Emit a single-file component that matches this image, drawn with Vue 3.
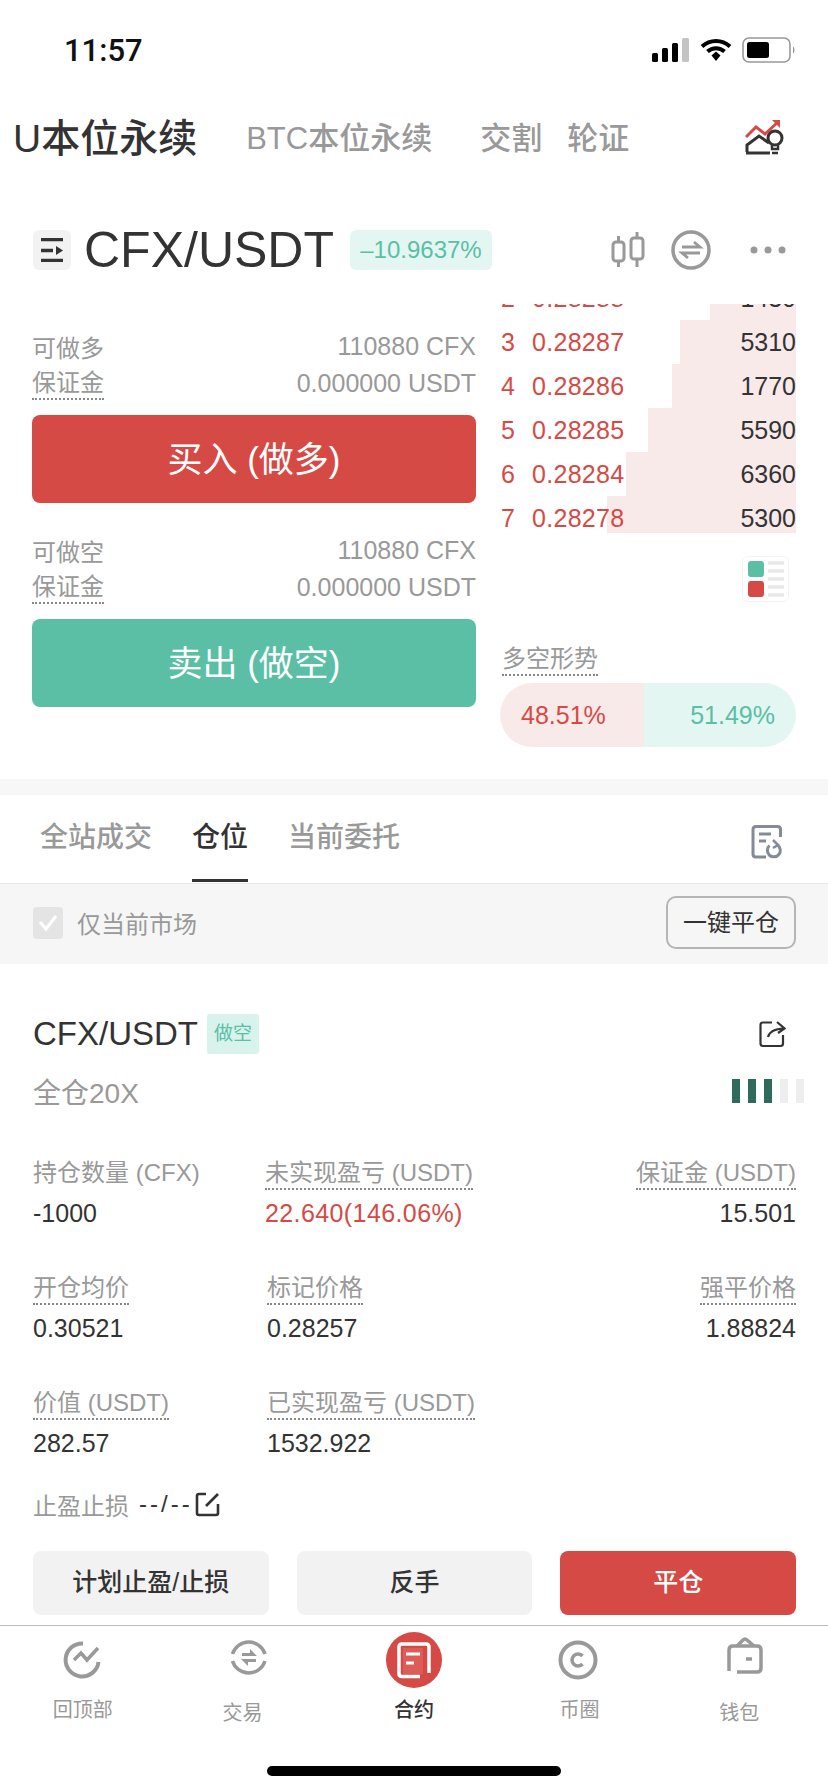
<template>
  <div class="page">
    <div class="status">
      <span class="time">11:57</span>
      <div class="status-icons">
        <svg width="38" height="24" viewBox="0 0 38 24">
          <rect x="0" y="15" width="6" height="9" rx="1.5" fill="#000" />
          <rect x="10" y="10" width="6" height="14" rx="1.5" fill="#000" />
          <rect x="20" y="5" width="6" height="19" rx="1.5" fill="#000" />
          <rect x="30" y="0" width="7" height="24" rx="1.5" fill="#c4c4c4" />
        </svg>
        <svg width="32" height="24" viewBox="0 0 32 24">
          <path d="M2 8.5C10 1 22 1 30 8.5" fill="none" stroke="#000" stroke-width="4" />
          <path d="M7.5 13.5C12.5 9 19.5 9 24.5 13.5" fill="none" stroke="#000" stroke-width="4" />
          <path d="M11.5 17.5L16 13.5L20.5 17.5L16 23z" fill="#000" />
        </svg>
        <svg width="54" height="26" viewBox="0 0 54 26">
          <rect x="1" y="1" width="47" height="24" rx="6" fill="none" stroke="#999" stroke-width="1.6" />
          <rect x="5" y="5" width="22" height="16" rx="2.5" fill="#000" />
          <path d="M51 9.5c2 1 2 6 0 7z" fill="#999" />
        </svg>
      </div>
    </div>

    <div class="top-tabs">
      <span class="tab-main">U本位永续</span>
      <span class="tab-btc">BTC本位永续</span>
      <span class="tab-jg">交割</span>
      <span class="tab-lz">轮证</span>
      <svg class="idea" width="40" height="36" viewBox="0 0 40 36">
        <path d="M1 18L11 8L20 15L33 3" fill="none" stroke="#d64a45" stroke-width="3" />
        <path d="M27 1H35V9z" fill="#d64a45" />
        <path d="M2 33V26L14 17L24 24" fill="none" stroke="#333" stroke-width="3" />
        <path d="M1 34H25" stroke="#333" stroke-width="3" />
        <circle cx="30" cy="19" r="7" fill="none" stroke="#333" stroke-width="3" />
        <path d="M27 26V30H33V26M27 34H33" fill="none" stroke="#333" stroke-width="2.5" />
      </svg>
    </div>

    <div class="market">
      <div class="menu-box">
        <svg width="24" height="24" viewBox="0 0 24 24">
          <path d="M1 3H23M1 14H13M1 24H23" stroke="#333" stroke-width="3.5" transform="translate(0 -1.5)" />
          <path d="M16 8L23 12.5L16 17z" fill="#333" />
        </svg>
      </div>
      <span class="pair">CFX/USDT</span>
      <span class="change">–10.9637%</span>
      <div class="market-icons">
        <svg width="34" height="38" viewBox="0 0 34 38">
          <g fill="none" stroke="#999" stroke-width="3">
            <rect x="2" y="11" width="11" height="19" rx="3" />
            <rect x="20" y="7" width="12" height="21" rx="3" />
            <path d="M7.5 5V11M7.5 30V36M26 1V7M26 28V36" />
          </g>
        </svg>
        <svg width="40" height="40" viewBox="0 0 40 40">
          <circle cx="20" cy="20" r="18" fill="none" stroke="#999" stroke-width="3.5" />
          <path d="M11 17H29L23 12M29 23H11L17 28" fill="none" stroke="#999" stroke-width="2.8" />
        </svg>
        <svg class="dots" width="36" height="8" viewBox="0 0 36 8">
          <circle cx="4" cy="4" r="3.5" fill="#999" />
          <circle cx="18" cy="4" r="3.5" fill="#999" />
          <circle cx="32" cy="4" r="3.5" fill="#999" />
        </svg>
      </div>
    </div>

    <div class="trade">
      <div class="left">
        <div class="info"><span>可做多</span><span class="amount">110880 CFX</span></div>
        <div class="info"><span class="dot">保证金</span><span class="amount">0.000000 USDT</span></div>
        <div class="big-btn buy">买入 (做多)</div>
        <div class="info second"><span>可做空</span><span class="amount">110880 CFX</span></div>
        <div class="info"><span class="dot">保证金</span><span class="amount">0.000000 USDT</span></div>
        <div class="big-btn sell">卖出 (做空)</div>
      </div>
      <div class="right">
        <div class="book">
          <div class="book-rows">
            <div v-for="row in bookRows" :key="row.n" class="book-row">
              <div class="book-bar" :style="{ width: row.bar + 'px' }"></div>
              <span class="book-n">{{ row.n }}</span>
              <span class="book-price">{{ row.price }}</span>
              <span class="book-size">{{ row.size }}</span>
            </div>
          </div>
        </div>
        <svg class="layout-icon" width="47" height="46" viewBox="0 0 47 46">
          <rect x="0.5" y="0.5" width="46" height="45" rx="5" fill="#fff" stroke="#f2f2f2" />
          <rect x="6" y="5" width="16" height="16" rx="3" fill="#5abfa5" />
          <rect x="6" y="25" width="16" height="16" rx="3" fill="#d64a45" />
          <path d="M26 7H42M26 15H42M26 23H42M26 31H42M26 39H42" stroke="#e8e8e8" stroke-width="3.5" />
        </svg>
        <span class="dot trend-title">多空形势</span>
        <div class="trend">
          <div class="trend-long">48.51%</div>
          <div class="trend-short">51.49%</div>
        </div>
      </div>
    </div>

    <div class="band"></div>

    <div class="list-tabs">
      <span class="list-tab">全站成交</span>
      <span class="list-tab active">仓位</span>
      <span class="list-tab">当前委托</span>
      <svg class="doc-icon" width="32" height="34" viewBox="0 0 32 34">
        <path d="M29.5 12V4.5Q29.5 1.5 26.5 1.5H5Q2 1.5 2 4.5V29Q2 32 5 32H15" fill="none" stroke="#858b96" stroke-width="3" />
        <path d="M8 9H20M8 16H15" stroke="#858b96" stroke-width="3" />
        <path d="M18.5 20.5A6.5 6.5 0 1 0 26.5 20" fill="none" stroke="#858b96" stroke-width="3" />
        <path d="M22 15L27 20L22 23" fill="none" stroke="#858b96" stroke-width="2.6" />
      </svg>
    </div>

    <div class="filter">
      <div class="check">
        <svg width="20" height="18" viewBox="0 0 20 18">
          <path d="M2 8L8 15L18 2" fill="none" stroke="#fff" stroke-width="3" />
        </svg>
      </div>
      <span class="filter-text">仅当前市场</span>
      <div class="close-all">一键平仓</div>
    </div>

    <div class="position">
      <div class="pos-title">
        <span class="pos-pair">CFX/USDT</span>
        <span class="pos-side">做空</span>
        <svg class="share" width="28" height="28" viewBox="0 0 28 28">
          <path d="M14 2.5H5Q2.5 2.5 2.5 5V23.5Q2.5 26 5 26H22.5Q25 26 25 23.5V15" fill="none" stroke="#333" stroke-width="2.2" />
          <path d="M10 17Q12 9 26 8.5M19 2L26.5 8.5L20 13" fill="none" stroke="#333" stroke-width="2.2" />
        </svg>
      </div>
      <div class="pos-sub">
        <span>全仓20X</span>
        <div class="risk">
          <i v-for="n in 5" :key="n" :class="{ on: n <= 3 }"></i>
        </div>
      </div>
      <div class="stats">
        <div v-for="cell in stats" :key="cell.label" class="stat" :class="{ end: cell.end, inset: cell.inset }">
          <span class="stat-label" :class="{ dot: cell.dot }">{{ cell.label }}</span>
          <span class="stat-value" :class="{ red: cell.red }">{{ cell.value }}</span>
        </div>
      </div>
      <div class="tpsl">
        <span class="tpsl-label">止盈止损</span>
        <span class="tpsl-value">--/--</span>
        <svg width="25" height="25" viewBox="0 0 25 25">
          <path d="M11 2H4Q2 2 2 4V21Q2 23 4 23H21Q23 23 23 21V12" fill="none" stroke="#333" stroke-width="2.6" />
          <path d="M11 14L23 2" fill="none" stroke="#333" stroke-width="2.6" />
        </svg>
      </div>
      <div class="actions">
        <div class="action">计划止盈/止损</div>
        <div class="action">反手</div>
        <div class="action danger">平仓</div>
      </div>
    </div>

    <div class="nav">
      <div class="nav-items">
        <div class="nav-item">
          <svg width="56" height="56" viewBox="0 0 56 56">
            <path d="M28 11.5A16.5 16.5 0 1 0 43.5 30" fill="none" stroke="#999" stroke-width="4" />
            <path d="M19 28L26 21L32 28L43 16" fill="none" stroke="#999" stroke-width="3.5" />
          </svg>
          <span>回顶部</span>
        </div>
        <div class="nav-item shifted">
          <svg width="56" height="56" viewBox="0 0 56 56">
            <path d="M12.5 22A17 17 0 0 1 45 22M45 29A17 17 0 0 1 12.5 29" fill="none" stroke="#999" stroke-width="3.5" />
            <path d="M22 24H37L30 17V21H22zM36 27H21L28 34V30H36z" fill="#999" />
          </svg>
          <span>交易</span>
        </div>
        <div class="nav-item active">
          <svg width="56" height="56" viewBox="0 0 56 56">
            <circle cx="28" cy="28" r="28" fill="#d64a45" />
            <rect x="17" y="16" width="20" height="26" fill="#dc5d58" />
            <path d="M34 44.5H16Q13 44.5 13 41.5V15Q13 12 16 12H40Q43 12 43 15V41" fill="none" stroke="#fff" stroke-width="3.5" />
            <path d="M20 22H34M20 31H28" stroke="#fff" stroke-width="3.2" />
          </svg>
          <span>合约</span>
        </div>
        <div class="nav-item">
          <svg width="56" height="56" viewBox="0 0 56 56">
            <circle cx="26" cy="28" r="17.5" fill="none" stroke="#999" stroke-width="4" />
            <path d="M30.5 24A6 6 0 1 0 30.5 32" fill="none" stroke="#999" stroke-width="3.5" />
          </svg>
          <span>币圈</span>
        </div>
        <div class="nav-item shifted">
          <svg width="56" height="56" viewBox="0 0 56 56">
            <path d="M12 39V18Q12 14 16 14H40Q44 14 44 18V36Q44 40 40 40H20" fill="none" stroke="#999" stroke-width="3.5" />
            <path d="M20 14L26 8Q28 6 30 8L37 14M29 27H35" fill="none" stroke="#999" stroke-width="3.5" />
          </svg>
          <span>钱包</span>
        </div>
      </div>
      <div class="home-bar"></div>
    </div>
  </div>
</template>

<script setup>
const bookRows = [
  { n: 2, price: '0.28288', size: '1430', bar: 86 },
  { n: 3, price: '0.28287', size: '5310', bar: 116 },
  { n: 4, price: '0.28286', size: '1770', bar: 124 },
  { n: 5, price: '0.28285', size: '5590', bar: 148 },
  { n: 6, price: '0.28284', size: '6360', bar: 170 },
  { n: 7, price: '0.28278', size: '5300', bar: 189 }
]

const stats = [
  { label: '持仓数量 (CFX)', value: '-1000' },
  { label: '未实现盈亏 (USDT)', value: '22.640(146.06%)', dot: true, red: true },
  { label: '保证金 (USDT)', value: '15.501', dot: true, end: true },
  { label: '开仓均价', value: '0.30521', dot: true },
  { label: '标记价格', value: '0.28257', dot: true, inset: true },
  { label: '强平价格', value: '1.88824', dot: true, end: true },
  { label: '价值 (USDT)', value: '282.57', dot: true },
  { label: '已实现盈亏 (USDT)', value: '1532.922', dot: true, inset: true }
]
</script>

<style>
html, body {
  margin: 0;
  background: #fff;
}
</style>

<style scoped>
.page {
  width: 828px;
  height: 1792px;
  overflow: hidden;
  display: flex;
  flex-direction: column;
  background: #fff;
  color: #333;
  font-family: "Liberation Sans", "Noto Sans CJK SC", sans-serif;
}

.status {
  height: 100px;
  flex: none;
  display: flex;
  align-items: center;
  padding: 0 32px 0 64px;
  box-sizing: border-box;
}
.time {
  font-family: Roboto, sans-serif;
  font-weight: 500;
  font-size: 31px;
  color: #111;
}
.status-icons {
  margin-left: auto;
  display: flex;
  align-items: center;
  gap: 10px;
}

.top-tabs {
  height: 74px;
  flex: none;
  box-sizing: border-box;
  padding-bottom: 4px;
  display: flex;
  align-items: center;
  color: #999;
  font-size: 31px;
  font-weight: 500;
}
.tab-main {
  margin-left: 13px;
  font-size: 39px;
  color: #333;
}
.tab-btc { margin-left: 49px; }
.tab-jg { margin-left: 48px; }
.tab-lz { margin-left: 25px; }
.idea { margin-left: auto; margin-right: 43px; margin-top: 4px; }

.market {
  height: 130px;
  flex: none;
  box-sizing: border-box;
  padding: 26px 42px 4px 33px;
  display: flex;
  align-items: center;
}
.menu-box {
  width: 38px;
  height: 40px;
  border-radius: 6px;
  background: #f2f2f2;
  display: flex;
  align-items: center;
  justify-content: center;
}
.pair {
  margin-left: 13px;
  font-size: 50px;
}
.change {
  margin-left: 16px;
  width: 142px;
  height: 40px;
  line-height: 40px;
  text-align: center;
  border-radius: 6px;
  background: #e4f6f2;
  color: #5abfa5;
  font-size: 24px;
}
.market-icons {
  margin-left: auto;
  display: flex;
  align-items: center;
  gap: 26px;
}
.dots { margin-left: 13px; }

.trade {
  height: 475px;
  flex: none;
  box-sizing: border-box;
  padding: 0 32px;
  display: flex;
  gap: 24px;
}
.left {
  width: 444px;
  padding-top: 24px;
  box-sizing: border-box;
}
.info {
  height: 37px;
  display: flex;
  align-items: center;
  justify-content: space-between;
  color: #999;
  font-size: 24px;
}
.info.second { margin-top: 29px; }
.amount {
  font-size: 25px;
}
.dot {
  display: inline-block;
  line-height: 30px;
  border-bottom: 2px dotted #888;
}
.big-btn {
  margin-top: 13px;
  height: 88px;
  line-height: 90px;
  border-radius: 8px;
  color: #fff;
  text-align: center;
  font-size: 35px;
}
.buy { background: #d64a45; }
.sell { background: #5abfa5; }

.right {
  width: 296px;
  display: flex;
  flex-direction: column;
  align-items: flex-start;
}
.book {
  width: 296px;
  height: 229px;
  flex: none;
  overflow: hidden;
  display: flex;
  flex-direction: column;
  justify-content: flex-end;
}
.book-rows {
  flex: none;
  margin-bottom: -7px;
}
.book-row {
  position: relative;
  height: 44px;
  display: flex;
  align-items: center;
  font-size: 25px;
}
.book-bar {
  position: absolute;
  top: 0;
  right: 0;
  bottom: 0;
  background: #f9eaea;
}
.book-n {
  position: relative;
  margin-left: 1px;
  width: 31px;
  color: #d64a45;
}
.book-price {
  position: relative;
  color: #d64a45;
  letter-spacing: 0.3px;
}
.book-size {
  position: relative;
  margin-left: auto;
  color: #333;
}
.layout-icon {
  margin-top: 23px;
  margin-left: 242px;
  flex: none;
}
.trend-title {
  margin-top: 42px;
  margin-left: 2px;
  font-size: 24px;
  color: #999;
}
.trend {
  margin-top: 7px;
  width: 296px;
  height: 64px;
  flex: none;
  border-radius: 32px;
  overflow: hidden;
  display: flex;
  font-size: 25px;
  line-height: 64px;
}
.trend-long {
  width: 144px;
  box-sizing: border-box;
  padding-left: 21px;
  background: #f9eaea;
  color: #d64a45;
}
.trend-short {
  flex: 1;
  box-sizing: border-box;
  padding-right: 21px;
  text-align: right;
  background: #e4f6f2;
  color: #5abfa5;
}

.band {
  height: 16px;
  flex: none;
  background: #f7f7f7;
}

.list-tabs {
  height: 89px;
  flex: none;
  box-sizing: border-box;
  border-bottom: 1px solid #e8e8e8;
  padding: 0 45px 0 40px;
  display: flex;
  align-items: flex-start;
  gap: 40px;
}
.list-tab {
  height: 87px;
  box-sizing: border-box;
  line-height: 85px;
  font-size: 28px;
  color: #999;
  font-weight: 500;
}
.list-tab.active {
  color: #333;
  border-bottom: 3px solid #333;
}
.doc-icon {
  margin-left: auto;
  margin-top: 30px;
}

.filter {
  height: 80px;
  flex: none;
  box-sizing: border-box;
  padding: 0 32px 3px 33px;
  background: #f6f6f6;
  display: flex;
  align-items: center;
}
.check {
  width: 30px;
  height: 32px;
  border-radius: 4px;
  background: #e4e4e4;
  display: flex;
  align-items: center;
  justify-content: center;
}
.filter-text {
  margin-left: 14px;
  font-size: 24px;
  color: #999;
}
.close-all {
  margin-left: auto;
  width: 130px;
  height: 53px;
  box-sizing: border-box;
  border: 2px solid #b5b5b5;
  border-radius: 10px;
  text-align: center;
  line-height: 49px;
  font-size: 24px;
  color: #333;
}

.position {
  flex: 1;
  box-sizing: border-box;
  padding: 50px 32px 0 33px;
}
.pos-title {
  height: 40px;
  display: flex;
  align-items: center;
}
.pos-pair {
  font-size: 33px;
}
.pos-side {
  margin-left: 9px;
  width: 52px;
  height: 40px;
  line-height: 40px;
  text-align: center;
  border-radius: 3px;
  background: #d8f2ec;
  color: #5abfa5;
  font-size: 19px;
}
.share {
  margin-left: auto;
  margin-right: 10px;
}
.pos-sub {
  margin-top: 19px;
  height: 36px;
  display: flex;
  align-items: center;
  justify-content: space-between;
  font-size: 28px;
  color: #999;
}
.risk {
  display: flex;
  gap: 8px;
  margin-right: -8px;
}
.risk i {
  width: 8px;
  height: 24px;
  background: #eee;
}
.risk i.on {
  background: #2f6b5a;
}
.stats {
  margin-top: 49px;
  display: grid;
  grid-template-columns: 232px 1fr auto;
  row-gap: 44px;
}
.stat {
  display: flex;
  flex-direction: column;
  align-items: flex-start;
  height: 71px;
}
.stat.end {
  align-items: flex-end;
}
.stat.inset {
  padding-left: 2px;
}
.stat-label {
  font-size: 24px;
  color: #999;
  line-height: 30px;
}
.stat-label:not(.dot) {
  padding-bottom: 2px;
}
.stat-value {
  margin-top: 8px;
  line-height: 30px;
  font-size: 25px;
  color: #333;
}
.stat-value.red {
  color: #d64a45;
  letter-spacing: 0.4px;
}
.tpsl {
  margin-top: 30px;
  height: 30px;
  display: flex;
  align-items: center;
  font-size: 24px;
}
.tpsl-label { color: #999; }
.tpsl-value { margin-left: 10px; margin-right: 2px; letter-spacing: 3px; }
.actions {
  margin-top: 32px;
  display: flex;
  gap: 28px;
}
.action {
  flex: 1;
  height: 64px;
  line-height: 63px;
  text-align: center;
  border-radius: 8px;
  background: #f2f2f2;
  font-size: 25px;
  font-weight: 500;
}
.action.danger {
  background: #d64a45;
  color: #fff;
}

.nav {
  height: 167px;
  flex: none;
  box-sizing: border-box;
  border-top: 1px solid #bbb;
  padding-top: 6px;
  display: flex;
  flex-direction: column;
}
.nav-items {
  display: grid;
  grid-template-columns: repeat(5, 1fr);
}
.nav-item {
  display: flex;
  flex-direction: column;
  align-items: center;
  font-size: 20px;
  line-height: 24px;
  color: #999;
}
.nav-item span {
  margin-top: 10px;
}
.nav-item.shifted span {
  margin-top: 13px;
  margin-right: 12px;
}
.nav-item.active {
  color: #333;
  font-weight: 500;
}
.home-bar {
  margin: auto auto 16px;
  width: 294px;
  height: 10px;
  border-radius: 5px;
  background: #000;
}
</style>
